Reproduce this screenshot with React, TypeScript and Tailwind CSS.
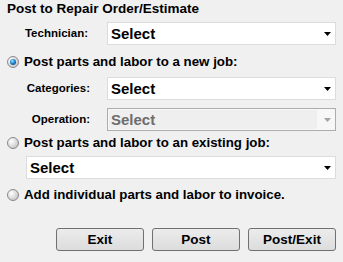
import React from "react";

const Arrow = ({ disabled = false }: { disabled?: boolean }) => (
  <svg width="7" height="4" viewBox="0 0 7 4" className="shrink-0">
    <path d="M0 0H7L3.5 4Z" fill={disabled ? "#a3a3a3" : "#000"} />
  </svg>
);

const Dropdown = ({ className = "", disabled = false }: { className?: string; disabled?: boolean }) =>
  disabled ? (
    <div className={`flex h-[23px] items-stretch border border-[#adadad] bg-[#f7f7f7] ${className}`}>
      <div className="m-px flex flex-1 items-center bg-[#efefef] pl-[2px] text-[15px] font-bold text-[#6d6d6d]">Select</div>
      <div className="flex w-[17px] items-center justify-center pl-[1px]">
        <Arrow disabled />
      </div>
    </div>
  ) : (
    <div className={`flex h-[23px] items-center border border-[#dcdcdc] bg-white pl-[3px] pr-[4px] ${className}`}>
      <span className="flex-1 text-[15px] font-bold text-black">Select</span>
      <Arrow />
    </div>
  );

const Radio = ({ checked = false }: { checked?: boolean }) => (
  <svg width="12" height="12" viewBox="0 0 12 12" className="shrink-0">
    <defs>
      <radialGradient id="rg" cx="0.35" cy="0.35" r="0.8">
        <stop offset="0" stopColor="#ffffff" />
        <stop offset="1" stopColor="#bdbdbd" />
      </radialGradient>
      <radialGradient id="dot" cx="0.4" cy="0.35" r="0.7">
        <stop offset="0" stopColor="#a9e3ff" />
        <stop offset="0.5" stopColor="#2a8fd8" />
        <stop offset="1" stopColor="#0b4f8c" />
      </radialGradient>
    </defs>
    <circle cx="6" cy="6" r="5.5" fill="url(#rg)" stroke="#8a8a8a" />
    {checked && <circle cx="6" cy="6" r="3" fill="url(#dot)" />}
  </svg>
);

const RadioRow = ({ label, checked = false, className = "" }: { label: string; checked?: boolean; className?: string }) => (
  <div className={`flex h-[18px] items-center gap-[5px] pl-[7px] ${className}`}>
    <Radio checked={checked} />
    <span className="text-[13.3px] font-bold text-black">{label}</span>
  </div>
);

const FieldRow = ({ label, disabled = false, className = "" }: { label: string; disabled?: boolean; className?: string }) => (
  <div className={`flex items-center ${className}`}>
    <span className="w-[90px] text-right text-[11.5px] font-bold text-black">{label}</span>
    <Dropdown disabled={disabled} className="ml-[17px] w-[229px]" />
  </div>
);

const Btn = ({ children }: { children: React.ReactNode }) => (
  <button className="h-[23px] w-[88px] rounded-[3px] border border-[#707070] bg-gradient-to-b from-[#ececec] to-[#dcdcdc] text-[13.5px] font-bold text-black">
    {children}
  </button>
);

export default function App() {
  return (
    <div
      className="flex h-[262px] w-[343px] flex-col overflow-hidden bg-[#f0f0f0] leading-none"
      style={{ fontFamily: '"Liberation Sans", Arial, sans-serif' }}
    >
      <div className="flex h-[18px] items-center pl-[7px] text-[13.5px] font-bold text-black">Post to Repair Order/Estimate</div>

      <div className="mt-[4px] flex items-center">
        <span className="w-[88px] text-right text-[11.5px] font-bold text-black">Technician:</span>
        <Dropdown className="ml-[19px] w-[229px]" />
      </div>

      <RadioRow checked label="Post parts and labor to a new job:" className="mt-[8px]" />

      <FieldRow label="Categories:" className="mt-[6px]" />
      <FieldRow label="Operation:" disabled className="mt-[8px]" />

      <RadioRow label="Post parts and labor to an existing job:" className="mt-[3px]" />

      <div className="mt-[4px] pl-[26px]">
        <Dropdown className="w-[310px]" />
      </div>

      <RadioRow label="Add individual parts and labor to invoice." className="mt-[7px]" />

      <div className="mt-[24px] flex gap-[8px] pl-[56px]">
        <Btn>Exit</Btn>
        <Btn>Post</Btn>
        <Btn>Post/Exit</Btn>
      </div>
    </div>
  );
}
